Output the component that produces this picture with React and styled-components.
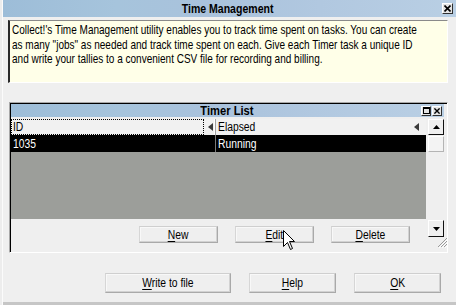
import React from 'react';
import styled, { createGlobalStyle } from 'styled-components';

const Global = createGlobalStyle`
  html, body { margin: 0; padding: 0; background: #efefef; }
  body {
    font-family: "Liberation Sans", Arial, sans-serif;
    font-size: 12px;
    color: #000;
    overflow: hidden;
  }
  * { box-sizing: border-box; }
`;

const Screen = styled.div`
  position: relative;
  width: 456px;
  height: 305px;
  display: flex;
  background: #e9e9e9;
  overflow: hidden;
`;

const BackStrip = styled.div`
  width: 3px;
  flex: none;
  background: #ededed;
  border-right: 1px solid #fbfbfb;
`;

const Dialog = styled.div`
  flex: 1;
  min-width: 0;
  display: flex;
  flex-direction: column;
  background: #efefef;
  border-bottom: 3px solid #c6c6c6;
`;

/* narrow text: the reference uses a condensed sans face */
const Txt = styled.span`
  display: inline-block;
  white-space: nowrap;
  transform: scaleX(${p => p.$sx || 0.86});
  transform-origin: ${p => p.$origin || 'center'};
  u { text-decoration: underline; text-underline-offset: 2px; }
`;

const TitleBar = styled.div`
  height: ${p => p.$h}px;
  flex: none;
  display: grid;
  grid-template-columns: 1fr auto 1fr;
  align-items: center;
  background: linear-gradient(90deg, #9dbdd8 0%, #a6c4dc 25%, #a9c2dc 45%, #b1c8e0 70%, #b9cfe4 100%);
  font-weight: bold;
  font-size: 13px;
  padding-right: ${p => p.$pr}px;
`;

const TitleText = styled.div`
  grid-column: 2;
  white-space: nowrap;
  line-height: 1;
`;

const TitleButtons = styled.div`
  grid-column: 3;
  justify-self: end;
  display: flex;
  gap: 1px;
`;

const TinyBtn = styled.div`
  width: ${p => p.$s}px;
  height: ${p => p.$s}px;
  background: #e4e4e4;
  border: 1px solid;
  border-color: #fff #303030 #303030 #fff;
  display: flex;
  align-items: center;
  justify-content: center;
  svg { display: block; }
`;

const DescBox = styled.div`
  margin: 3px 8px 0 5px;
  height: 63px;
  flex: none;
  overflow: hidden;
  background: #ffffe8;
  border-top: 1px solid #8a8a8a;
  border-left: 2px solid #2a2a2a;
  border-right: 1px solid #fff;
  border-bottom: 1px solid #fff;
  padding: 2px 2px 0 2px;
  font-size: 13px;
  line-height: 14.5px;
`;

const Line = styled.div`
  white-space: nowrap;
`;

const Panel = styled.div`
  margin: 19px 8px 0 6px;
  height: 151px;
  flex: none;
  display: flex;
  flex-direction: column;
  border-top: 1px solid #a8a8a8;
  border-left: 1px solid #a8a8a8;
  border-right: 1px solid #fff;
  border-bottom: 1px solid #fff;
  box-shadow: inset 1px 1px 0 #000;
  padding: 1px 3px 0 1px;
`;

const PanelBody = styled.div`
  margin-top: 2px;
  flex: 1;
  display: flex;
  gap: 2px;
`;

const ListArea = styled.div`
  flex: 1;
  min-width: 0;
  display: flex;
  flex-direction: column;
`;

const HeaderRow = styled.div`
  height: 16px;
  display: grid;
  grid-template-columns: 205px 1fr;
  background: #f1f1f1;
`;

const HeaderCell = styled.div`
  display: flex;
  align-items: center;
  border-right: ${p => (p.$divider ? '1px solid #a0a0a0' : 'none')};
  box-shadow: ${p => (p.$divider ? 'inset -1px 0 0 #fff' : 'none')};
`;

const HeaderLabel = styled.div`
  flex: 1;
  height: 100%;
  display: flex;
  align-items: center;
  padding-left: ${p => p.$pl}px;
  outline: ${p => (p.$focus ? '1px dotted #000' : 'none')};
  outline-offset: -1px;
`;

const SortArrow = styled.div`
  width: 0;
  height: 0;
  margin: 0 ${p => p.$mr}px 0 4px;
  border-top: 4px solid transparent;
  border-bottom: 4px solid transparent;
  border-right: 5px solid #3a3a3a;
`;

const DataRow = styled.div`
  height: 17px;
  display: grid;
  grid-template-columns: 205px 1fr;
  background: ${p => (p.$selected ? '#000' : '#fff')};
  color: ${p => (p.$selected ? '#fff' : '#000')};
`;

const DataCell = styled.div`
  display: flex;
  align-items: center;
  padding-left: 2px;
  border-right: ${p => (p.$divider ? '1px solid #7a7a7a' : 'none')};
`;

const EmptyArea = styled.div`
  height: 67px;
  background: #9c9e9a;
`;

const ButtonRow = styled.div`
  flex: 1;
  display: flex;
  justify-content: flex-end;
  align-items: flex-start;
  padding: ${p => p.$pt}px ${p => p.$pr}px 0 0;
  gap: ${p => p.$gap}px;
`;

const Button = styled.div`
  width: ${p => p.$w}px;
  height: ${p => p.$h}px;
  flex: none;
  display: flex;
  align-items: center;
  justify-content: center;
  background: #efefef;
  border: 1px solid;
  border-color: #cfcfcf #a9a9a9 #a9a9a9 #d6d6d6;
  box-shadow: inset -1px -1px 0 #d2d2d2, inset 1px 1px 0 #f8f8f8;
  font-size: 12px;
  white-space: nowrap;
`;

const ScrollBar = styled.div`
  width: 16px;
  flex: none;
  display: flex;
  flex-direction: column;
  padding-bottom: 4px;
`;

const ScrollBtn = styled.div`
  height: ${p => p.$h}px;
  flex: none;
  display: flex;
  align-items: center;
  justify-content: center;
  background: #efefef;
  border: 1px solid;
  border-color: #fff #111 #111 #fff;
`;

const Thumb = styled.div`
  height: 16px;
  margin-top: 1px;
  flex: none;
  background: #f3f3f3;
  border: 1px solid;
  border-color: #fff #b4b4b4 #b4b4b4 #fff;
`;

const Track = styled.div`
  flex: 1;
`;

const Grip = styled.div`
  height: 11px;
  flex: none;
  display: flex;
  justify-content: flex-end;
  margin-right: -4px;
`;

const BottomRow = styled.div`
  display: flex;
  justify-content: flex-end;
  gap: 18px;
  margin-top: 20px;
  padding-right: 15px;
`;

const Cursor = styled.svg`
  position: absolute;
  left: 283px;
  top: 230px;
`;

const TriUp = () => (
  <svg width="7" height="4" viewBox="0 0 7 4"><path d="M0 4 L3.5 0 L7 4 Z" fill="#000" /></svg>
);
const TriDown = () => (
  <svg width="7" height="4" viewBox="0 0 7 4"><path d="M0 0 L7 0 L3.5 4 Z" fill="#000" /></svg>
);
const XGlyph = ({ s = 7 }) => (
  <svg width={s} height={s} viewBox="0 0 7 7">
    <path d="M0.5 0.5 L6.5 6.5 M6.5 0.5 L0.5 6.5" stroke="#000" strokeWidth="1.6" />
  </svg>
);
const SquareGlyph = () => (
  <svg width="7" height="7" viewBox="0 0 7 7">
    <rect x="0.5" y="0.5" width="6" height="6" fill="none" stroke="#000" />
    <line x1="0" y1="1.5" x2="7" y2="1.5" stroke="#000" />
  </svg>
);

export default function App() {
  return (
    <>
      <Global />
      <Screen>
        <BackStrip />
        <Dialog>
          <TitleBar $h={17} $pr={3}>
            <TitleText><Txt $sx={0.81}>Time Management</Txt></TitleText>
            <TitleButtons>
              <TinyBtn $s={11}><XGlyph /></TinyBtn>
            </TitleButtons>
          </TitleBar>

          <DescBox>
            <Line><Txt $sx={0.77} $origin="left">Collect!'s Time Management utility enables you to track time spent on tasks. You can create</Txt></Line>
            <Line><Txt $sx={0.77} $origin="left">as many "jobs" as needed and track time spent on each. Give each Timer task a unique ID</Txt></Line>
            <Line><Txt $sx={0.77} $origin="left">and write your tallies to a convenient CSV file for recording and billing.</Txt></Line>
          </DescBox>

          <Panel>
            <TitleBar $h={13} $pr={2}>
              <TitleText><Txt $sx={0.86}>Timer List</Txt></TitleText>
              <TitleButtons>
                <TinyBtn $s={10}><SquareGlyph /></TinyBtn>
                <TinyBtn $s={10}><XGlyph s={6} /></TinyBtn>
              </TitleButtons>
            </TitleBar>
            <PanelBody>
              <ListArea>
                <HeaderRow>
                  <HeaderCell $divider>
                    <HeaderLabel $focus $pl={2}><Txt $origin="left">ID</Txt></HeaderLabel>
                    <SortArrow $mr={2} />
                  </HeaderCell>
                  <HeaderCell>
                    <HeaderLabel $pl={2}><Txt $origin="left">Elapsed</Txt></HeaderLabel>
                    <SortArrow $mr={7} />
                  </HeaderCell>
                </HeaderRow>
                <DataRow $selected>
                  <DataCell $divider><Txt $origin="left">1035</Txt></DataCell>
                  <DataCell><Txt $origin="left">Running</Txt></DataCell>
                </DataRow>
                <EmptyArea />
                <ButtonRow $pt={7} $pr={16} $gap={17}>
                  <Button $w={79} $h={17}><Txt><u>N</u>ew</Txt></Button>
                  <Button $w={79} $h={17}><Txt><u>E</u>dit</Txt></Button>
                  <Button $w={79} $h={17}><Txt><u>D</u>elete</Txt></Button>
                </ButtonRow>
              </ListArea>
              <ScrollBar>
                <ScrollBtn $h={16}><TriUp /></ScrollBtn>
                <Thumb />
                <Track />
                <ScrollBtn $h={17}><TriDown /></ScrollBtn>
                <Grip>
                  <svg width="11" height="11" viewBox="0 0 11 11">
                    <path d="M10 1 L1 10 M10 4 L4 10 M10 7 L7 10" stroke="#9a9a9a" strokeWidth="1" />
                    <path d="M11 2 L2 11 M11 5 L5 11 M11 8 L8 11" stroke="#fff" strokeWidth="1" />
                  </svg>
                </Grip>
              </ScrollBar>
            </PanelBody>
          </Panel>

          <BottomRow>
            <Button $w={126} $h={20}><Txt><u>W</u>rite to file</Txt></Button>
            <Button $w={87} $h={20}><Txt><u>H</u>elp</Txt></Button>
            <Button $w={87} $h={20}><Txt><u>O</u>K</Txt></Button>
          </BottomRow>
        </Dialog>
        <Cursor width="13" height="21" viewBox="0 0 13 21">
          <path d="M0.5 0.5 L0.5 16.5 L4.5 12.5 L7.5 19.5 L9.5 18.5 L6.5 11.5 L11.5 11.5 Z" fill="#fff" stroke="#000" strokeWidth="1" strokeLinejoin="miter" />
        </Cursor>
      </Screen>
    </>
  );
}
